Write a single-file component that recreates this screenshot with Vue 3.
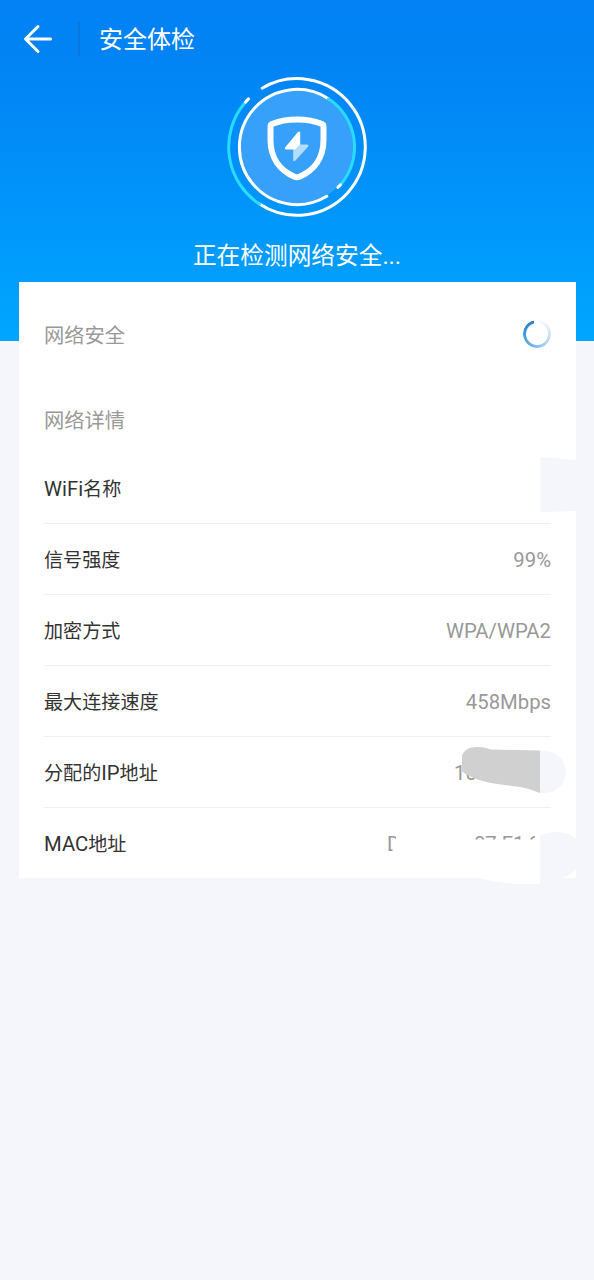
<script setup>
const rows = [
  { label: [{ latin: 'WiFi' }, { text: '名称' }], value: '' },
  { label: [{ text: '信号强度' }], value: '99%' },
  { label: [{ text: '加密方式' }], value: 'WPA/WPA2' },
  { label: [{ text: '最大连接速度' }], value: '458Mbps' },
  { label: [{ text: '分配的' }, { latin: 'IP' }, { text: '地址' }], value: '10', kind: 'ip' },
  { label: [{ latin: 'MAC' }, { text: '地址' }], value: 'D8:C8:E9:07:F1:28', kind: 'mac' },
]
</script>

<template>
  <main class="page">
    <header class="hero">
      <nav class="bar">
        <svg class="back" width="30" height="30" viewBox="0 0 30 30">
          <path d="M16 2.500 3.500 15l12.500 12.500M4 15H28.500" />
        </svg>
        <i class="sep"></i>
        <h1>安全体检</h1>
      </nav>
      <svg class="emblem" width="144" height="144" viewBox="-72 -72 144 144">
        <circle r="57" fill="#36a0fa" />
        <g fill="none" stroke-width="3" stroke-linecap="round">
          <path class="w" d="M-34.800 -58.800A68.300 68.300 0 1 1 -37.500 57.100" />
          <path class="c" d="M-37.500 57.100A68.300 68.300 0 0 1 -52.500 -43.700" />
          <path class="w" d="M-51.500 -44.900L-48.500 -48.100" />
          <path class="w" d="M29.800 49.300A57.600 57.600 0 1 1 31.500 -48.200" />
          <path class="c" d="M31.500 -48.200A57.600 57.600 0 0 1 43.800 37.400" />
          <path class="w" d="M43.400 37.900L40.800 40.500" />
        </g>
        <path class="shield" d="M0 -27.500Q14.500 -27.500 25 -23Q26.500 -22.300 26.500 -20.500V-7C26.500 11 17 23.500 2.500 29.700Q0 30.800 -2.500 29.700C-17 23.500 -26.500 11 -26.500 -7V-20.500Q-26.500 -22.300 -25 -23Q-14.500 -27.500 0 -27.500Z" />
        <path d="M1 -2.500H10.500Q12.200 -2 11.200 -.5L-1.800 13.800Q-3.800 15 -3.800 13V1Z" fill="#b3dcff" />
        <path d="M.8 -14.800Q3.200 -16.500 3.200 -14V-2.500L-2 2.500H-11.200Q-12.900 2 -11.700 .3Z" fill="#fff" />
      </svg>
      <p class="status">正在检测网络安全...</p>
    </header>

    <section class="card">
      <div class="check">
        <span>网络安全</span>
        <i class="spinner"></i>
      </div>
      <h2>网络详情</h2>
      <div v-for="(row, i) in rows" :key="i" class="row">
        <span class="label"><span v-for="(part, j) in row.label" :key="j" :class="{ latin: part.latin }">{{ part.latin || part.text }}</span></span>
        <span class="value" :class="row.kind">{{ row.value }}</span>
      </div>
      <svg class="redact" width="557" height="606" viewBox="19 282 557 606">
        <path d="M540.500 457L576 460V511L540.500 512Z" fill="#f4f6fb" />
        <path d="M539 751H545A21 21 0 0 1 545 793H539Z" fill="#f4f6fb" />
        <path d="M462 771V756Q464 749 472 747.500Q481 746 491 749.500L540 750.500V793Q526 787 512 786L494 783.500Q480 781 472 777Q464 774 462 771Z" fill="#d0d0d0" />
        <path d="M396 830H470V839.500H541V884Q500 885 480 878H396L392.500 860V839.500H396Z" fill="#fff" />
        <path d="M525 830H529V842H525ZM535 830H552V845H535Z" fill="#fff" />
        <path d="M540 836Q549 832 557 832Q569 832 576 839V869Q570 876 561 878H576V888H540Z" fill="#f4f6fb" />
      </svg>
    </section>
  </main>
</template>

<style>
body {
  background: #f4f6fb;
}
</style>

<style scoped>
.page {
  min-height: 1280px;
  background: #f4f6fb;
  font-family: Roboto, "Noto Sans CJK SC", sans-serif;
}
.hero {
  height: 341px;
  background: linear-gradient(#0282f4 0, #0284f5 70px, #00a6ff 341px);
  display: flex;
  flex-direction: column;
  align-items: center;
  color: #fff;
}
.bar {
  width: 100%;
  height: 75px;
  padding: 0 0 0 22px;
  box-sizing: border-box;
  display: flex;
  align-items: center;
  margin-top: 1px;
  margin-bottom: -1px;
}
.back {
  fill: none;
  stroke: #fff;
  stroke-width: 3;
  stroke-linecap: round;
  stroke-linejoin: round;
}
.sep {
  width: 2px;
  height: 34px;
  margin: 0 19px 0 26px;
  background: #0878df;
}
h1 {
  margin: 0;
  padding-top: 3px;
  font-size: 24px;
  line-height: 36px;
  font-weight: 400;
}
.emblem {
  display: block;
  flex: none;
}
.w {
  stroke: #fff;
}
.c {
  stroke: #27dcff;
}
.shield {
  fill: none;
  stroke: #fff;
  stroke-width: 6;
  stroke-linejoin: round;
}
.status {
  margin: 19px 0 0;
  font-size: 23.700px;
  line-height: 36px;
}
.card {
  position: relative;
  width: 557px;
  height: 596px;
  margin: -59px 0 0 19px;
  padding: 0 25px;
  box-sizing: border-box;
  background: #fff;
}
.check {
  height: 104px;
  display: flex;
  align-items: center;
  justify-content: space-between;
  font-size: 20.300px;
  color: #999;
}
.spinner {
  width: 28px;
  height: 28px;
  border-radius: 50%;
  background: conic-gradient(#fff 0deg, #e3edf6 60deg, #b5d7f1 130deg, #72b4e9 200deg, #4098e0 270deg, #267fc5 345deg, #fff 346deg);
  -webkit-mask: radial-gradient(circle, transparent 10.500px, #000 11.500px);
  mask: radial-gradient(circle, transparent 10.500px, #000 11.500px);
}
h2 {
  height: 67px;
  margin: 0;
  padding-top: 2px;
  box-sizing: border-box;
  line-height: 67px;
  font-size: 20.300px;
  font-weight: 400;
  color: #999;
}
.row {
  height: 71px;
  box-sizing: border-box;
  border-bottom: 1px solid #f0f0f2;
  display: flex;
  align-items: center;
  justify-content: space-between;
}
.row:last-of-type {
  border-bottom-color: transparent;
}
.label {
  font-size: 19.100px;
  color: #333;
}
.latin {
  font-size: 20.300px;
}
.value {
  padding-top: 2px;
  font-size: 20.300px;
  color: #999;
}
.ip {
  width: 97px;
}
.mac {
  width: 164px;
  white-space: nowrap;
}
.redact {
  position: absolute;
  left: 0;
  top: 0;
}
</style>
